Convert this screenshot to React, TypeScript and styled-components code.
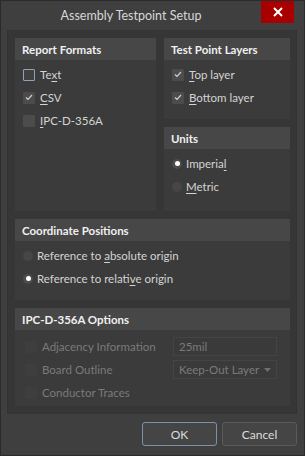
import React from "react";
import styled, { createGlobalStyle } from "styled-components";

const Global = createGlobalStyle`
  html, body {
    margin: 0;
    padding: 0;
    background: #3f3f3f;
  }
  body {
    font-family: Lato, "Noto Sans", sans-serif;
    font-size: 11.5px;
    color: #d4d4d4;
  }
  * {
    box-sizing: border-box;
  }
`;

type Option = {
  label: React.ReactNode;
  checked?: boolean;
  focused?: boolean;
};

export default function App() {
  const formats: Option[] = [
    { label: <>Te<u>x</u>t</>, focused: true },
    { label: <><u>C</u>SV</>, checked: true },
    { label: <><u>I</u>PC-D-356A</> },
  ];
  const layers: Option[] = [
    { label: <><u>T</u>op layer</>, checked: true },
    { label: <><u>B</u>ottom layer</>, checked: true },
  ];

  return (
    <Window>
      <Global />
      <TitleBar>
        <Title>Assembly Testpoint Setup</Title>
        <CloseButton>
          <svg width="10" height="10" viewBox="0 0 10 10">
            <path d="M1 1 L9 9 M9 1 L1 9" stroke="#fff" strokeWidth="2" />
          </svg>
        </CloseButton>
      </TitleBar>

      <Panel>
        <Group $area="formats">
          <Header>Report Formats</Header>
          <Items>
            {formats.map((f, i) => (
              <Row key={i}>
                <CheckBox checked={f.checked} focused={f.focused} />
                <Label>{f.label}</Label>
              </Row>
            ))}
          </Items>
        </Group>

        <Group $area="layers">
          <Header>Test Point Layers</Header>
          <Items>
            {layers.map((f, i) => (
              <Row key={i}>
                <CheckBox checked={f.checked} />
                <Label>{f.label}</Label>
              </Row>
            ))}
          </Items>
        </Group>

        <Group $area="units">
          <Header>Units</Header>
          <Items>
            <Row>
              <Radio selected />
              <Label>
                Imperia<u>l</u>
              </Label>
            </Row>
            <Row>
              <Radio />
              <Label>
                <u>M</u>etric
              </Label>
            </Row>
          </Items>
        </Group>

        <Group $area="coords">
          <Header>Coordinate Positions</Header>
          <Items>
            <Row>
              <Radio />
              <Label>
                Reference to <u>a</u>bsolute origin
              </Label>
            </Row>
            <Row>
              <Radio selected />
              <Label>
                Reference to relati<u>v</u>e origin
              </Label>
            </Row>
          </Items>
        </Group>

        <Group $area="ipc">
          <Header>IPC-D-356A Options</Header>
          <OptionGrid>
            <OptionLabel>
              <CheckBox disabled />
              <Label $disabled>Adjacency Information</Label>
            </OptionLabel>
            <Field>25mil</Field>
            <OptionLabel>
              <CheckBox disabled />
              <Label $disabled>Board Outline</Label>
            </OptionLabel>
            <Field>
              Keep-Out Layer
              <svg width="7" height="4" viewBox="0 0 7 4">
                <path d="M0 0 H7 L3.5 4 Z" fill="#6f6f6f" />
              </svg>
            </Field>
            <OptionLabel>
              <CheckBox disabled />
              <Label $disabled>Conductor Traces</Label>
            </OptionLabel>
          </OptionGrid>
        </Group>
      </Panel>

      <Footer>
        <Button $primary>OK</Button>
        <Button>Cancel</Button>
      </Footer>
    </Window>
  );
}

function CheckBox({
  checked,
  focused,
  disabled,
}: {
  checked?: boolean;
  focused?: boolean;
  disabled?: boolean;
}) {
  return (
    <Box $focused={focused} $disabled={disabled}>
      {checked && (
        <svg width="8" height="7" viewBox="0 0 8 7">
          <path
            d="M1 3.5 L3 5.5 L7 1"
            stroke="#d0d0d0"
            strokeWidth="1.2"
            fill="none"
          />
        </svg>
      )}
    </Box>
  );
}

function Radio({ selected }: { selected?: boolean }) {
  return <RadioDot $selected={selected}>{selected && <Dot />}</RadioDot>;
}

const Window = styled.div`
  width: 305px;
  height: 456px;
  border: 1px solid #2b2b2b;
  background: #3f3f3f;
  display: flex;
  flex-direction: column;
`;

const TitleBar = styled.div`
  height: 29px;
  display: flex;
  align-items: flex-start;
`;

const Title = styled.div`
  flex: 1;
  text-align: center;
  font-size: 12.5px;
  line-height: 30px;
  color: #d8d8d8;
`;

const CloseButton = styled.div`
  width: 33px;
  height: 22px;
  margin-right: 10px;
  background: #a80000;
  display: flex;
  align-items: center;
  justify-content: center;
`;

const Panel = styled.div`
  margin: 0 7px 0 6px;
  height: 384px;
  border: 1px solid #333;
  background: #363636;
  padding: 7px 6px 7px 7px;
  display: grid;
  grid-template-columns: 141px 1fr;
  grid-template-rows: 81px 84px 81px 98px;
  grid-template-areas:
    "formats layers"
    "formats units"
    "coords coords"
    "ipc ipc";
  gap: 8px;
`;

const Group = styled.div<{ $area: string }>`
  grid-area: ${(p) => p.$area};
  background: #3b3b3b;
  display: flex;
  flex-direction: column;
`;

const Header = styled.div`
  height: 22px;
  line-height: 23px;
  padding-left: 7px;
  background: #474747;
  font-weight: 700;
  color: #f0f0f0;
`;

const Items = styled.div`
  padding: 3px 0 0 8px;
  display: flex;
  flex-direction: column;
`;

const Row = styled.div`
  height: 23px;
  display: flex;
  align-items: center;
`;

const Label = styled.span<{ $disabled?: boolean }>`
  color: ${(p) => (p.$disabled ? "#7a7a7a" : "#d4d4d4")};
  white-space: nowrap;

  u {
    text-underline-offset: 2px;
  }
`;

const Box = styled.span<{ $focused?: boolean; $disabled?: boolean }>`
  width: 12px;
  height: 12px;
  margin-right: 5px;
  flex: none;
  display: flex;
  align-items: center;
  justify-content: center;
  border-radius: 1px;
  background: ${(p) =>
    p.$disabled ? "#3e3e3e" : p.$focused ? "#404040" : "#4c4c4c"};
  border: 1px solid
    ${(p) => (p.$focused ? "#8ea3b8" : p.$disabled ? "#3e3e3e" : "#4c4c4c")};
`;

const RadioDot = styled.span<{ $selected?: boolean }>`
  width: 10px;
  height: 10px;
  margin-right: 4px;
  flex: none;
  border-radius: 50%;
  background: ${(p) => (p.$selected ? "#4c4c4c" : "#464646")};
  display: flex;
  align-items: center;
  justify-content: center;
`;

const Dot = styled.span`
  width: 5px;
  height: 5px;
  border-radius: 50%;
  background: #fff;
`;

const OptionGrid = styled.div`
  padding: 7px 12px 0 10px;
  display: grid;
  grid-template-columns: 148px 104px;
  grid-auto-rows: 19px;
  row-gap: 4px;
  align-items: center;
`;

const OptionLabel = styled.div`
  display: flex;
  align-items: center;
`;

const Field = styled.div`
  height: 19px;
  padding: 0 5px;
  border: 1px solid #444;
  background: #3a3a3a;
  color: #7a7a7a;
  display: flex;
  align-items: center;
  justify-content: space-between;
`;

const Footer = styled.div`
  flex: 1;
  display: flex;
  justify-content: flex-end;
  align-items: flex-start;
  gap: 5px;
  padding: 8px 7px 0 0;
`;

const Button = styled.div<{ $primary?: boolean }>`
  width: 75px;
  height: 24px;
  display: flex;
  align-items: center;
  justify-content: center;
  background: #454545;
  border: 1px solid ${(p) => (p.$primary ? "#7a93aa" : "#5a5a5a")};
  border-radius: 3px;
  font-size: 12px;
  color: #dcdcdc;
`;
